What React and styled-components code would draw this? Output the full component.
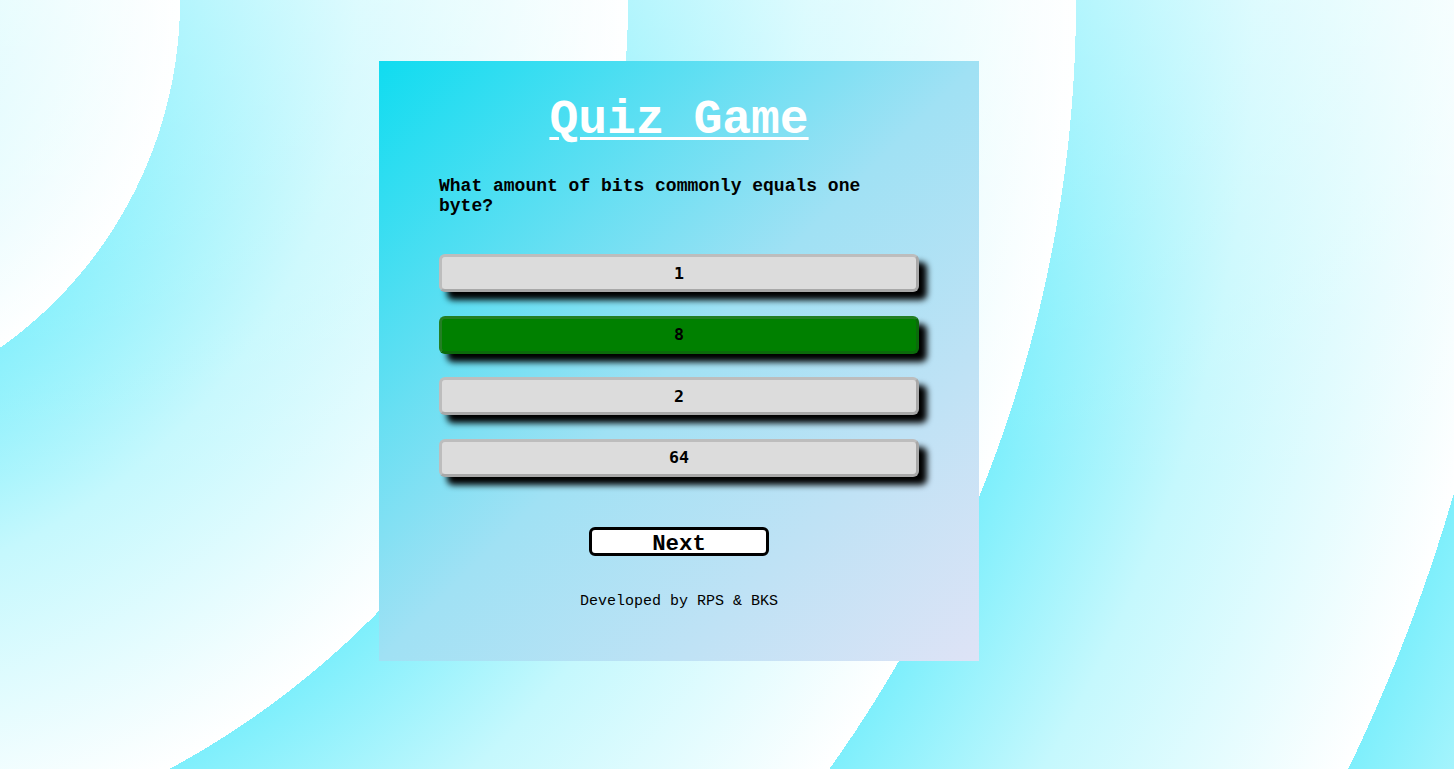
import React from "react";
import styled, { createGlobalStyle } from "styled-components";

const GlobalStyle = createGlobalStyle`
  body {
    margin: 0;
    font-family: "Liberation Mono", "Courier New", monospace;
  }
  * {
    box-sizing: border-box;
  }
`;

const Page = styled.div`
  min-height: 100vh;
  padding-top: 61px;
  background:
    linear-gradient(
      to bottom,
      rgba(255, 255, 255, 0.42) 0%,
      rgba(255, 255, 255, 0.12) 40%,
      rgba(255, 255, 255, 0) 62%
    ),
    repeating-radial-gradient(
      circle at -246px 0px,
      #7eeffc -22px,
      #c5f8fd 157px,
      #ffffff 426px
    );
`;

const Card = styled.div`
  width: 600px;
  height: 600px;
  margin-left: 379px;
  display: flex;
  flex-direction: column;
  align-items: center;
  background: linear-gradient(
    to bottom right,
    #10dcf0 0%,
    #a0e1f4 50%,
    #dee3f6 100%
  );
`;

const Title = styled.h1`
  margin: 32px 0 0;
  font-size: 48px;
  line-height: 54px;
  font-weight: 700;
  color: #ffffff;
  text-decoration: underline;
  text-decoration-thickness: 3px;
  text-underline-offset: 4px;
`;

const Question = styled.p`
  width: 480px;
  margin: 29px 0 0;
  padding-left: 0;
  font-size: 18px;
  line-height: 20px;
  font-weight: 700;
  color: #000;
`;

const AnswerList = styled.div`
  width: 480px;
  margin-top: 38px;
  display: flex;
  flex-direction: column;
  gap: 23.5px;
`;

const AnswerButton = styled.button`
  width: 100%;
  height: 38px;
  padding: 0;
  border: 3px solid;
  border-radius: 6px;
  border-color: ${(p) =>
    p.$correct ? "#237f23 #0b6b0b #0b6b0b #237f23" : "#bdbdbd #a8a8a8 #a8a8a8 #bdbdbd"};
  background: ${(p) => (p.$correct ? "#008000" : "#dcdcdc")};
  box-shadow: 8px 8px 6px #000;
  font-family: "DejaVu Sans Mono", monospace;
  font-size: 16.6px;
  font-weight: 700;
  color: #000;
  cursor: pointer;
`;

const NextButton = styled.button`
  width: 180px;
  height: 29px;
  margin-top: 50.5px;
  padding: 3px 0 0;
  border: 3px solid #000;
  border-radius: 6px;
  background: #fff;
  font-family: "Liberation Mono", "Courier New", monospace;
  font-size: 22.4px;
  line-height: 1;
  font-weight: 700;
  color: #000;
  cursor: pointer;
`;

const Footer = styled.p`
  margin: 37px 0 0;
  font-size: 15px;
  line-height: 17px;
  color: #000;
`;

const answers = [
  { text: "1", correct: false },
  { text: "8", correct: true },
  { text: "2", correct: false },
  { text: "64", correct: false },
];

const App = () => {
  return (
    <>
      <GlobalStyle />
      <Page>
        <Card>
          <Title>Quiz Game</Title>
          <Question>What amount of bits commonly equals one byte?</Question>
          <AnswerList>
            {answers.map((a) => (
              <AnswerButton key={a.text} $correct={a.correct}>
                {a.text}
              </AnswerButton>
            ))}
          </AnswerList>
          <NextButton>Next</NextButton>
          <Footer>Developed by RPS &amp; BKS</Footer>
        </Card>
      </Page>
    </>
  );
};

export default App;
